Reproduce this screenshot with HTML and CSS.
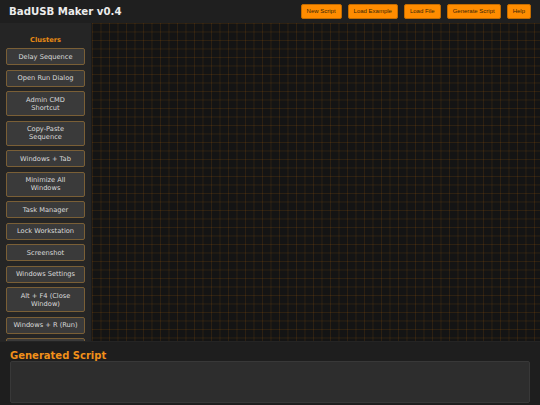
FILE: index.html
```html
<!DOCTYPE html>
<html>
<head>
<meta charset="utf-8">
<link rel="stylesheet" href="styles.css">
</head>
<body>
<header class="topbar">
  <h1 class="title">BadUSB Maker v0.4</h1>
  <nav class="actions">
    <button class="act">New Script</button>
    <button class="act">Load Example</button>
    <button class="act">Load File</button>
    <button class="act">Generate Script</button>
    <button class="act">Help</button>
  </nav>
</header>
<main class="workspace">
  <aside class="sidebar">
    <h2 class="side-title">Clusters</h2>
    <div class="clusters">
      <button class="cluster">Delay Sequence</button>
      <button class="cluster">Open Run Dialog</button>
      <button class="cluster">Admin CMD<br>Shortcut</button>
      <button class="cluster">Copy-Paste<br>Sequence</button>
      <button class="cluster">Windows + Tab</button>
      <button class="cluster">Minimize All<br>Windows</button>
      <button class="cluster">Task Manager</button>
      <button class="cluster">Lock Workstation</button>
      <button class="cluster">Screenshot</button>
      <button class="cluster">Windows Settings</button>
      <button class="cluster">Alt + F4 (Close<br>Window)</button>
      <button class="cluster">Windows + R (Run)</button>
      <button class="cluster cluster-more" aria-label="More clusters"></button>
    </div>
  </aside>
  <section class="canvas"></section>
</main>
<footer class="output">
  <h2 class="out-title">Generated Script</h2>
  <div class="out-box"></div>
</footer>
</body>
</html>
```

FILE: styles.css
```css
html, body {
  margin: 0;
  padding: 0;
  height: 100%;
}
body {
  display: flex;
  flex-direction: column;
  background: #1e1e1e;
  font-family: "DejaVu Sans", Verdana, sans-serif;
  overflow: hidden;
}
.topbar {
  height: 23px;
  flex: 0 0 23px;
  display: flex;
  align-items: center;
  justify-content: space-between;
  padding: 0 9px;
  background: #1f1f1f;
  box-sizing: border-box;
}
.title {
  margin: 0;
  font-size: 10.2px;
  font-weight: bold;
  color: #ececec;
  line-height: 12px;
}
.actions {
  display: flex;
  gap: 6px;
}
.act {
  font-family: "Liberation Sans", Arial, sans-serif;
  font-size: 6px;
  line-height: 7px;
  height: 15px;
  padding: 3px 5px;
  background: #ff8c00;
  color: #3a2608;
  border: 1px solid #c46c00;
  border-radius: 2px;
  box-sizing: border-box;
}
.workspace {
  flex: 1;
  display: flex;
  min-height: 0;
}
.sidebar {
  width: 92px;
  flex: 0 0 92px;
  box-sizing: border-box;
  background: #252525;
  padding: 13px 6px 0;
  overflow: hidden;
  border-right: 1px solid #1b1b1b;
}
.side-title {
  margin: 0 0 3px;
  font-size: 6.67px;
  line-height: 9px;
  font-weight: bold;
  color: #e88a14;
  text-align: center;
}
.clusters {
  display: flex;
  flex-direction: column;
  gap: 4.2px;
}
.cluster {
  display: block;
  width: 100%;
  font-family: "DejaVu Sans", Verdana, sans-serif;
  font-size: 6.67px;
  line-height: 8px;
  padding: 3.67px 3px;
  background: #3a3a3a;
  color: #dcdcdc;
  border: 1px solid #7a5f36;
  border-radius: 2px;
  text-align: center;
  box-sizing: border-box;
}
.cluster-more {
  height: 17.33px;
}
.canvas {
  flex: 1;
  background-color: #141414;
  background-image:
    linear-gradient(to right, rgba(255, 140, 0, 0.11) 1px, transparent 1px),
    linear-gradient(to bottom, rgba(255, 140, 0, 0.11) 1px, transparent 1px);
  background-size: 8.5px 8.5px;
}
.output {
  flex: 0 0 64px;
  height: 64px;
  box-sizing: border-box;
  padding: 8px 10px 0 10px;
  background: #1e1e1e;
  border-top: 1px solid #242424;
}
.out-title {
  margin: 0;
  font-size: 10px;
  line-height: 11px;
  font-weight: bold;
  color: #f0901a;
}
.out-box {
  height: 42px;
  background: #2d2d2d;
  border: 1px solid #383838;
  border-radius: 2px;
  box-sizing: border-box;
}
```
